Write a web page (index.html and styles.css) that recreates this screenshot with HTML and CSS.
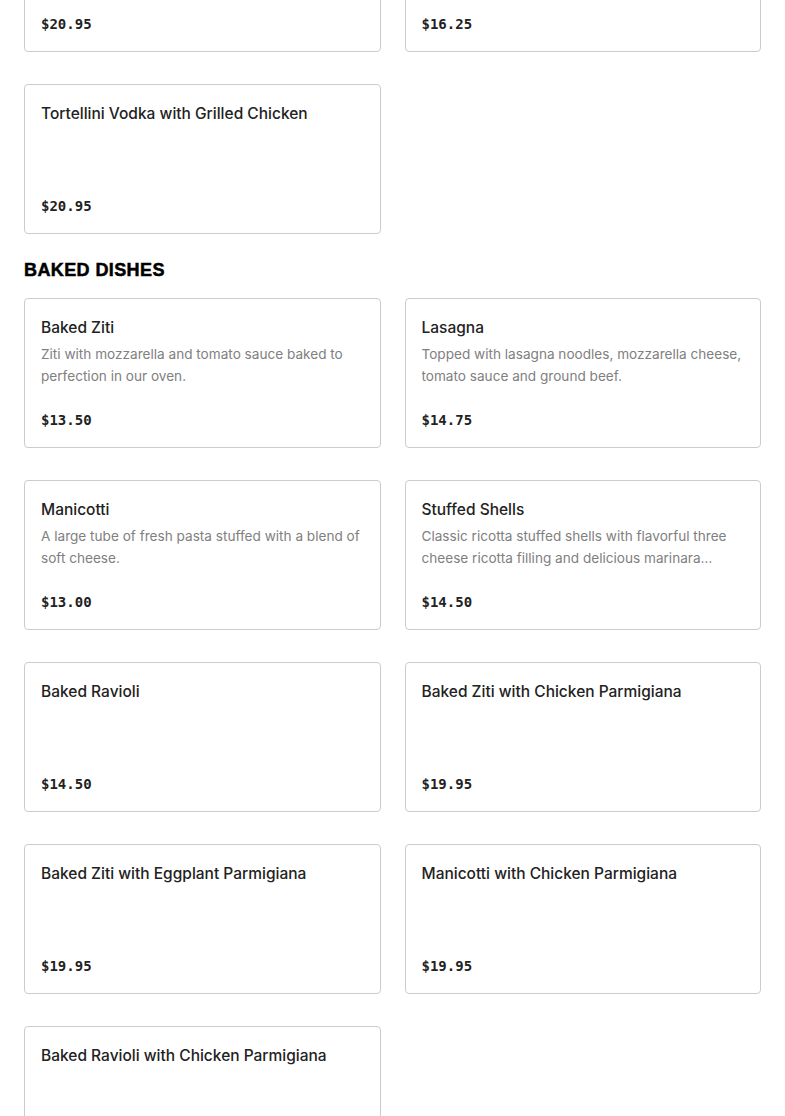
FILE: index.html
```
<!DOCTYPE html>
<html>
<head>
<meta charset="utf-8">
<link rel="stylesheet" href="styles.css">
</head>
<body>
<div class="page">
  <div class="grid top">
    <div class="card"><div class="title">Penne Vodka with Grilled Chicken</div><div class="price">$20.95</div></div>
    <div class="card"><div class="title">Tortellini Vodka</div><div class="price">$16.25</div></div>
    <div class="card"><div class="title">Tortellini Vodka with Grilled Chicken</div><div class="price">$20.95</div></div>
  </div>
  <h2 class="section">BAKED DISHES</h2>
  <div class="grid">
    <div class="card"><div class="title">Baked Ziti</div><div class="desc">Ziti with mozzarella and tomato sauce baked to perfection in our oven.</div><div class="price">$13.50</div></div>
    <div class="card"><div class="title">Lasagna</div><div class="desc">Topped with lasagna noodles, mozzarella cheese, tomato sauce and ground beef.</div><div class="price">$14.75</div></div>
    <div class="card"><div class="title">Manicotti</div><div class="desc">A large tube of fresh pasta stuffed with a blend of soft cheese.</div><div class="price">$13.00</div></div>
    <div class="card"><div class="title">Stuffed Shells</div><div class="desc">Classic ricotta stuffed shells with flavorful three cheese ricotta filling and delicious marinara sauce.</div><div class="price">$14.50</div></div>
    <div class="card"><div class="title">Baked Ravioli</div><div class="price">$14.50</div></div>
    <div class="card"><div class="title">Baked Ziti with Chicken Parmigiana</div><div class="price">$19.95</div></div>
    <div class="card"><div class="title">Baked Ziti with Eggplant Parmigiana</div><div class="price">$19.95</div></div>
    <div class="card"><div class="title">Manicotti with Chicken Parmigiana</div><div class="price">$19.95</div></div>
    <div class="card"><div class="title">Baked Ravioli with Chicken Parmigiana</div><div class="price">$19.95</div></div>
  </div>
</div>
</body>
</html>
```
FILE: styles.css
```
html, body {
  margin: 0;
  padding: 0;
  background: #fff;
}
body {
  font-family: Inter, "Noto Sans", sans-serif;
  color: #222;
  overflow: hidden;
}
.page {
  padding: 0 24px;
}
.grid {
  display: grid;
  grid-template-columns: 1fr 1fr;
  column-gap: 24px;
  row-gap: 32px;
}
.grid.top {
  margin-top: -98px;
}
.card {
  box-sizing: border-box;
  height: 150px;
  border: 1px solid #cccccc;
  border-radius: 4px;
  padding: 16px;
  display: flex;
  flex-direction: column;
  overflow: hidden;
}
.title {
  margin-top: 1px;
  margin-bottom: -1px;
  font-size: 15.5px;
  font-weight: 500;
  line-height: 24px;
  color: #222;
}
.desc {
  margin-top: 4px;
  font-size: 13.6px;
  line-height: 22px;
  color: #808080;
  display: -webkit-box;
  -webkit-line-clamp: 2;
  -webkit-box-orient: vertical;
  overflow: hidden;
}
.price {
  margin-top: auto;
  margin-bottom: 1px;
  font-family: "DejaVu Sans Mono", monospace;
  font-weight: bold;
  font-size: 14px;
  line-height: 20px;
  color: #222;
}
.section {
  margin: 24px 0 16px;
  font-family: "Liberation Sans", Arial, sans-serif;
  font-weight: 900;
  font-size: 18px;
  line-height: 24px;
  color: #000;
  letter-spacing: 0.4px;
  -webkit-text-stroke: 0.5px #000;
}
```
